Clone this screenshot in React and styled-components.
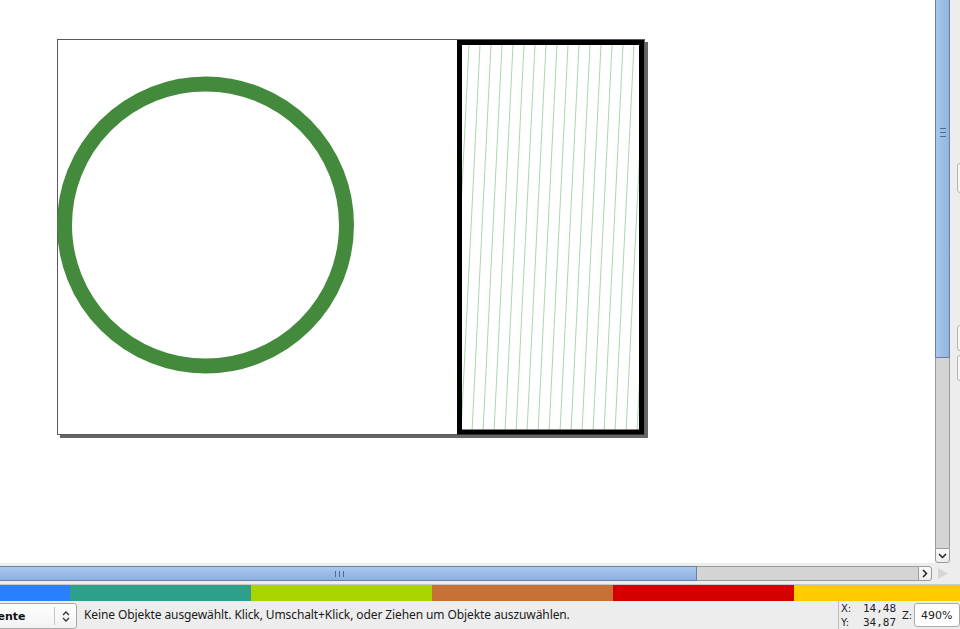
import React from "react";
import styled, { createGlobalStyle } from "styled-components";

const Global = createGlobalStyle`
  html, body { margin: 0; padding: 0; background: #ededed; }
  body { font-family: "Noto Sans", "DejaVu Sans", sans-serif; overflow: hidden; }
`;

const Window = styled.div`
  width: 960px;
  height: 629px;
  display: flex;
  flex-direction: column;
  background: #ededed;
  overflow: hidden;
`;

const TopArea = styled.div`
  display: flex;
  height: 563px;
  flex: none;
`;

const Canvas = styled.div`
  width: 935px;
  height: 563px;
  background: #ffffff;
  flex: none;
`;

const VScroll = styled.div`
  width: 15px;
  flex: none;
  display: flex;
  flex-direction: column;
`;

const VThumb = styled.div`
  height: 358px;
  box-sizing: border-box;
  border: 1px solid #6a7fa8;
  border-top: none;
  background: linear-gradient(to right, #aac8ec, #90b3e0);
  display: flex;
  align-items: center;
  justify-content: center;
  padding-bottom: 92px;
`;

const GripH = styled.div`
  width: 6px;
  height: 7px;
  border-top: 1px solid #4d6b99;
  border-bottom: 1px solid #4d6b99;
  position: relative;
  &::after {
    content: "";
    position: absolute;
    left: 0;
    right: 0;
    top: 3px;
    border-top: 1px solid #4d6b99;
  }
`;

const VTrack = styled.div`
  flex: 1;
  background: #d4d4d4;
  border-left: 1px solid #9a9a9a;
  border-right: 1px solid #9a9a9a;
`;

const ArrowBtn = styled.div`
  box-sizing: border-box;
  background: linear-gradient(#fafafa, #ececec);
  border: 1px solid #9a9a9a;
  display: flex;
  align-items: center;
  justify-content: center;
  color: #222;
  width: ${(p) => p.$w}px;
  height: ${(p) => p.$h}px;
  border-radius: ${(p) => p.$radius};
  flex: none;
`;

const SideStrip = styled.div`
  width: 10px;
  flex: none;
  position: relative;
`;

const SideButton = styled.div`
  position: absolute;
  left: 7px;
  width: 10px;
  top: ${(p) => p.$top}px;
  height: ${(p) => p.$h}px;
  box-sizing: border-box;
  border: 1px solid #b5b5b5;
  border-radius: 3px;
  background: #f6f6f6;
`;

const Gap = styled.div`
  height: ${(p) => p.$h}px;
  flex: none;
`;

const HScrollRow = styled.div`
  display: flex;
  height: 15px;
  flex: none;
`;

const HThumb = styled.div`
  width: 697px;
  box-sizing: border-box;
  border: 1px solid #6a7fa8;
  border-left: none;
  background: linear-gradient(#aac8ec, #8cb0df);
  display: flex;
  align-items: center;
  justify-content: center;
  padding-right: 18px;
`;

const GripV = styled.div`
  width: 7px;
  height: 6px;
  border-left: 1px solid #4d6b99;
  border-right: 1px solid #4d6b99;
  position: relative;
  &::after {
    content: "";
    position: absolute;
    top: 0;
    bottom: 0;
    left: 3px;
    border-left: 1px solid #4d6b99;
  }
`;

const HTrack = styled.div`
  width: 221px;
  background: #d4d4d4;
  border-top: 1px solid #9a9a9a;
  border-bottom: 1px solid #9a9a9a;
  box-sizing: border-box;
`;

const Corner = styled.div`
  flex: 1;
  display: flex;
  align-items: center;
  padding-left: 5px;
`;

const Palette = styled.div`
  display: flex;
  height: 17px;
  flex: none;
  border-top: 1px solid #c8c8c8;
  box-sizing: border-box;
`;

const Swatch = styled.div`
  width: ${(p) => p.$w}px;
  flex: none;
  background: ${(p) => p.$c};
`;

const StatusBar = styled.div`
  height: 28px;
  flex: none;
  display: flex;
  align-items: center;
`;

const LayerCombo = styled.div`
  margin-left: -37px;
  width: 114px;
  height: 26px;
  align-self: flex-start;
  margin-top: 2px;
  box-sizing: border-box;
  border: 1px solid #a9a9a9;
  border-radius: 3px;
  background: linear-gradient(#ffffff, #f2f2f2);
  display: flex;
  align-items: center;
  flex: none;
`;

const ComboText = styled.div`
  flex: 1;
  font-size: 11px;
  font-weight: bold;
  color: #111;
  padding-left: 6px;
  font-family: "DejaVu Sans", sans-serif;
  white-space: nowrap;
`;

const ComboSpin = styled.div`
  width: 21px;
  height: 18px;
  border-left: 1px solid #c4c4c4;
  display: flex;
  align-items: center;
  justify-content: center;
`;

const Message = styled.div`
  flex: 1;
  font-size: 12px;
  letter-spacing: -0.1px;
  color: #1a1a1a;
  padding-left: 7px;
  padding-bottom: 2px;
  white-space: nowrap;
`;

const CoordBlock = styled.div`
  width: 64px;
  height: 28px;
  border-left: 1px solid #bdbdbd;
  display: grid;
  grid-template-columns: 22px 1fr;
  grid-template-rows: 14px 14px;
  align-items: center;
  padding-left: 2px;
  box-sizing: border-box;
  flex: none;
`;

const CoordLabel = styled.div`
  font-size: 10px;
  line-height: 12px;
  font-family: "DejaVu Sans", sans-serif;
  color: #222;
  padding-top: ${(p) => (p.$low ? 2 : 1)}px;
`;

const CoordValue = styled.div`
  font-size: 11px;
  line-height: 13px;
  font-family: "DejaVu Sans Mono", monospace;
  color: #222;
`;

const ZoomLabel = styled.div`
  font-size: 10px;
  font-family: "DejaVu Sans", sans-serif;
  color: #222;
  width: 12px;
  flex: none;
`;

const ZoomInput = styled.div`
  width: 46px;
  height: 24px;
  box-sizing: border-box;
  border: 1px solid #a9a9a9;
  border-radius: 3px;
  background: #fff;
  font-size: 11px;
  font-family: "DejaVu Sans", sans-serif;
  color: #222;
  display: flex;
  align-items: center;
  padding-left: 6px;
  flex: none;
`;

const hatchLines = Array.from({ length: 20 }, (_, i) => 440 + i * 11);

function Drawing() {
  return (
    <svg width="935" height="563" viewBox="0 0 935 563">
      <defs>
        <clipPath id="inner">
          <rect x="462" y="45" width="179" height="387" />
        </clipPath>
      </defs>
      <rect x="60" y="42" width="588" height="396" fill="#666" />
      <rect x="57.5" y="39.5" width="587" height="395" fill="#fff" stroke="#5a5a5a" strokeWidth="1" />
      <circle cx="205.5" cy="225" r="141" fill="none" stroke="#438a3d" strokeWidth="15" />
      <g clipPath="url(#inner)" stroke="#acd6ac" strokeWidth="1">
        {hatchLines.map((x) => (
          <line key={x} x1={x + 10} y1="432" x2={x + 29} y2="45" />
        ))}
      </g>
      <rect x="459.5" y="42.5" width="182" height="389.5" fill="none" stroke="#000" strokeWidth="5" />
    </svg>
  );
}

const ChevronDown = () => (
  <svg width="9" height="6" viewBox="0 0 9 6">
    <path d="M1 1 L4.5 4.5 L8 1" fill="none" stroke="#222" strokeWidth="1.5" />
  </svg>
);

const ChevronRight = () => (
  <svg width="6" height="9" viewBox="0 0 6 9">
    <path d="M1 1 L4.5 4.5 L1 8" fill="none" stroke="#222" strokeWidth="1.5" />
  </svg>
);

const UpDown = () => (
  <svg width="8" height="13" viewBox="0 0 8 13">
    <path d="M1 5 L4 2 L7 5 M1 8 L4 11 L7 8" fill="none" stroke="#333" strokeWidth="1.3" />
  </svg>
);

const CornerTriangle = () => (
  <svg width="12" height="13" viewBox="0 0 12 13">
    <path d="M1 1 L11 6.5 L1 12 Z" fill="#d6d6d6" />
  </svg>
);

const swatches = [
  ["#2a7fff", 70],
  ["#2ca089", 181],
  ["#aad400", 181],
  ["#c87137", 181],
  ["#d40000", 181],
  ["#ffcc00", 166],
];

export default function App() {
  return (
    <Window>
      <Global />
      <TopArea>
        <Canvas>
          <Drawing />
        </Canvas>
        <VScroll>
          <VThumb>
            <GripH />
          </VThumb>
          <VTrack />
          <ArrowBtn $w={15} $h={15} $radius="0 0 3px 3px">
            <ChevronDown />
          </ArrowBtn>
        </VScroll>
        <SideStrip>
          <SideButton $top={163} $h={30} />
          <SideButton $top={325} $h={26} />
          <SideButton $top={355} $h={26} />
        </SideStrip>
      </TopArea>
      <Gap $h={3} />
      <HScrollRow>
        <HThumb>
          <GripV />
        </HThumb>
        <HTrack />
        <ArrowBtn $w={14} $h={15} $radius="0 3px 3px 0">
          <ChevronRight />
        </ArrowBtn>
        <Corner>
          <CornerTriangle />
        </Corner>
      </HScrollRow>
      <Gap $h={3} />
      <Palette>
        {swatches.map(([c, w]) => (
          <Swatch key={c} $c={c} $w={w} />
        ))}
      </Palette>
      <StatusBar>
        <LayerCombo>
          <ComboText>Präsente</ComboText>
          <ComboSpin>
            <UpDown />
          </ComboSpin>
        </LayerCombo>
        <Message>
          Keine Objekte ausgewählt. Klick, Umschalt+Klick, oder Ziehen um Objekte auszuwählen.
        </Message>
        <CoordBlock>
          <CoordLabel>X:</CoordLabel>
          <CoordValue>14,48</CoordValue>
          <CoordLabel $low>Y:</CoordLabel>
          <CoordValue>34,87</CoordValue>
        </CoordBlock>
        <ZoomLabel>Z:</ZoomLabel>
        <ZoomInput>490%</ZoomInput>
      </StatusBar>
    </Window>
  );
}
